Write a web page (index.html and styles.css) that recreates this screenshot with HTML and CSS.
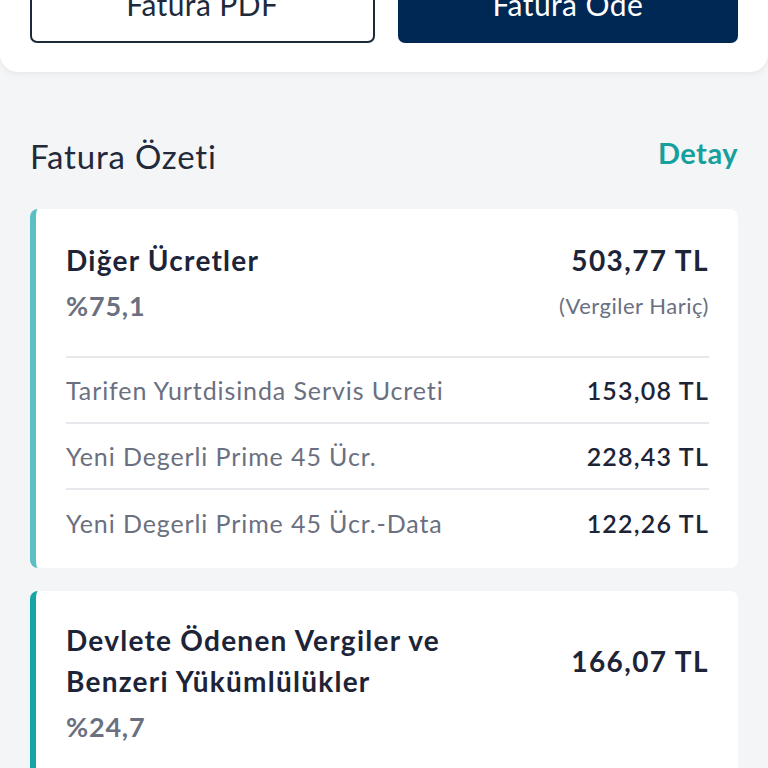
FILE: index.html
```html
<!DOCTYPE html>
<html lang="tr">
<head>
<meta charset="utf-8">
<link rel="stylesheet" href="styles.css">
</head>
<body>
<div class="top-panel">
  <div class="btn btn-outline">Fatura PDF</div>
  <div class="btn btn-fill">Fatura Öde</div>
</div>
<main class="content">
  <div class="section-head">
    <h2 class="section-title">Fatura Özeti</h2>
    <a class="detail-link">Detay</a>
  </div>
  <section class="card card-light">
    <div class="card-head">
      <div class="head-left">
        <div class="card-title">Diğer Ücretler</div>
        <div class="card-pct">%75,1</div>
      </div>
      <div class="head-right">
        <div class="card-amount">503,77 TL</div>
        <div class="card-note">(Vergiler Hariç)</div>
      </div>
    </div>
    <ul class="rows">
      <li class="row"><span class="row-label">Tarifen Yurtdisinda Servis Ucreti</span><span class="row-value">153,08 TL</span></li>
      <li class="row"><span class="row-label">Yeni Degerli Prime 45 Ücr.</span><span class="row-value">228,43 TL</span></li>
      <li class="row"><span class="row-label">Yeni Degerli Prime 45 Ücr.-Data</span><span class="row-value">122,26 TL</span></li>
    </ul>
  </section>
  <section class="card card-dark">
    <div class="card-head">
      <div class="head-left">
        <div class="card-title title-wrap">Devlete Ödenen Vergiler ve Benzeri Yükümlülükler</div>
        <div class="card-pct">%24,7</div>
      </div>
      <div class="head-right head-mid">
        <div class="card-amount">166,07 TL</div>
      </div>
    </div>
  </section>
</main>
</body>
</html>
```
FILE: styles.css
```css
* { box-sizing: border-box; }
html, body { margin: 0; padding: 0; }
body {
  background: #f4f5f7;
  font-family: "Lato", "Open Sans", sans-serif;
  color: #1d2438;
  overflow: hidden;
  height: 768px;
}
.top-panel {
  background: #fff;
  margin-top: -35px;
  height: 107px;
  padding: 0 30px 29px;
  display: flex;
  gap: 23px;
  align-items: flex-end;
  border-radius: 0 0 18px 18px;
  box-shadow: 0 2px 6px rgba(0,0,0,0.06);
}
.btn {
  flex: 1;
  height: 78px;
  border-radius: 7px;
  display: flex;
  align-items: center;
  justify-content: center;
  font-size: 30px;
  letter-spacing: 0.4px;
}
.btn-outline {
  border: 2px solid #1d2a3c;
  color: #1d2a3c;
  background: #fff;
}
.btn-fill {
  background: #002855;
  color: #fff;
}
.content {
  padding: 0 30px;
}
.section-head {
  display: flex;
  justify-content: space-between;
  align-items: center;
  margin-top: 64px;
  height: 42px;
}
.section-title {
  margin: 0;
  font-weight: 400;
  font-size: 33px;
  color: #222a3a;
  letter-spacing: 0.8px;
  position: relative;
  top: -1px;
}
.detail-link {
  font-size: 29px;
  font-weight: 700;
  color: #16a09c;
  letter-spacing: 0.5px;
  position: relative;
  top: -5px;
}
.card {
  background: #fff;
  border-radius: 8px;
  border-left: 6px solid #5bbfc4;
  padding: 0 29px 12px 30px;
  margin-top: 31px;
}
.card-dark {
  border-left-color: #16a4a6;
  margin-top: 23px;
  min-height: 200px;
  padding-bottom: 0;
}
.card-head {
  display: flex;
  justify-content: space-between;
  padding: 30px 0 25px;
  border-bottom: 2px solid #e6e8ec;
}
.card-dark .card-head { border-bottom: none; padding-top: 29px; }
.head-right { text-align: right; }
.head-mid { align-self: flex-start; padding-top: 20px; }
.card-title {
  font-size: 28px;
  font-weight: 700;
  line-height: 42px;
  letter-spacing: 1.25px;
  color: #1d2438;
}
.title-wrap { max-width: 440px; line-height: 41px; }
.card-pct {
  font-size: 27px;
  font-weight: 700;
  color: #6a7080;
  line-height: 50px;
  letter-spacing: 0.8px;
}
.card-amount {
  font-size: 28px;
  font-weight: 700;
  line-height: 42px;
  letter-spacing: 1.4px;
  color: #1d2438;
}
.card-note {
  font-size: 22px;
  color: #6a7080;
  line-height: 50px;
  letter-spacing: 0.5px;
}
.rows { list-style: none; margin: 0; padding: 0; }
.row {
  display: flex;
  justify-content: space-between;
  align-items: center;
  height: 66px;
  border-bottom: 2px solid #e6e8ec;
  font-size: 25px;
}
.row:last-child { border-bottom: none; }
.row-label { color: #6a7080; letter-spacing: 0.9px; }
.row-value { font-weight: 600; color: #1d2438; letter-spacing: 1.2px; }
```
